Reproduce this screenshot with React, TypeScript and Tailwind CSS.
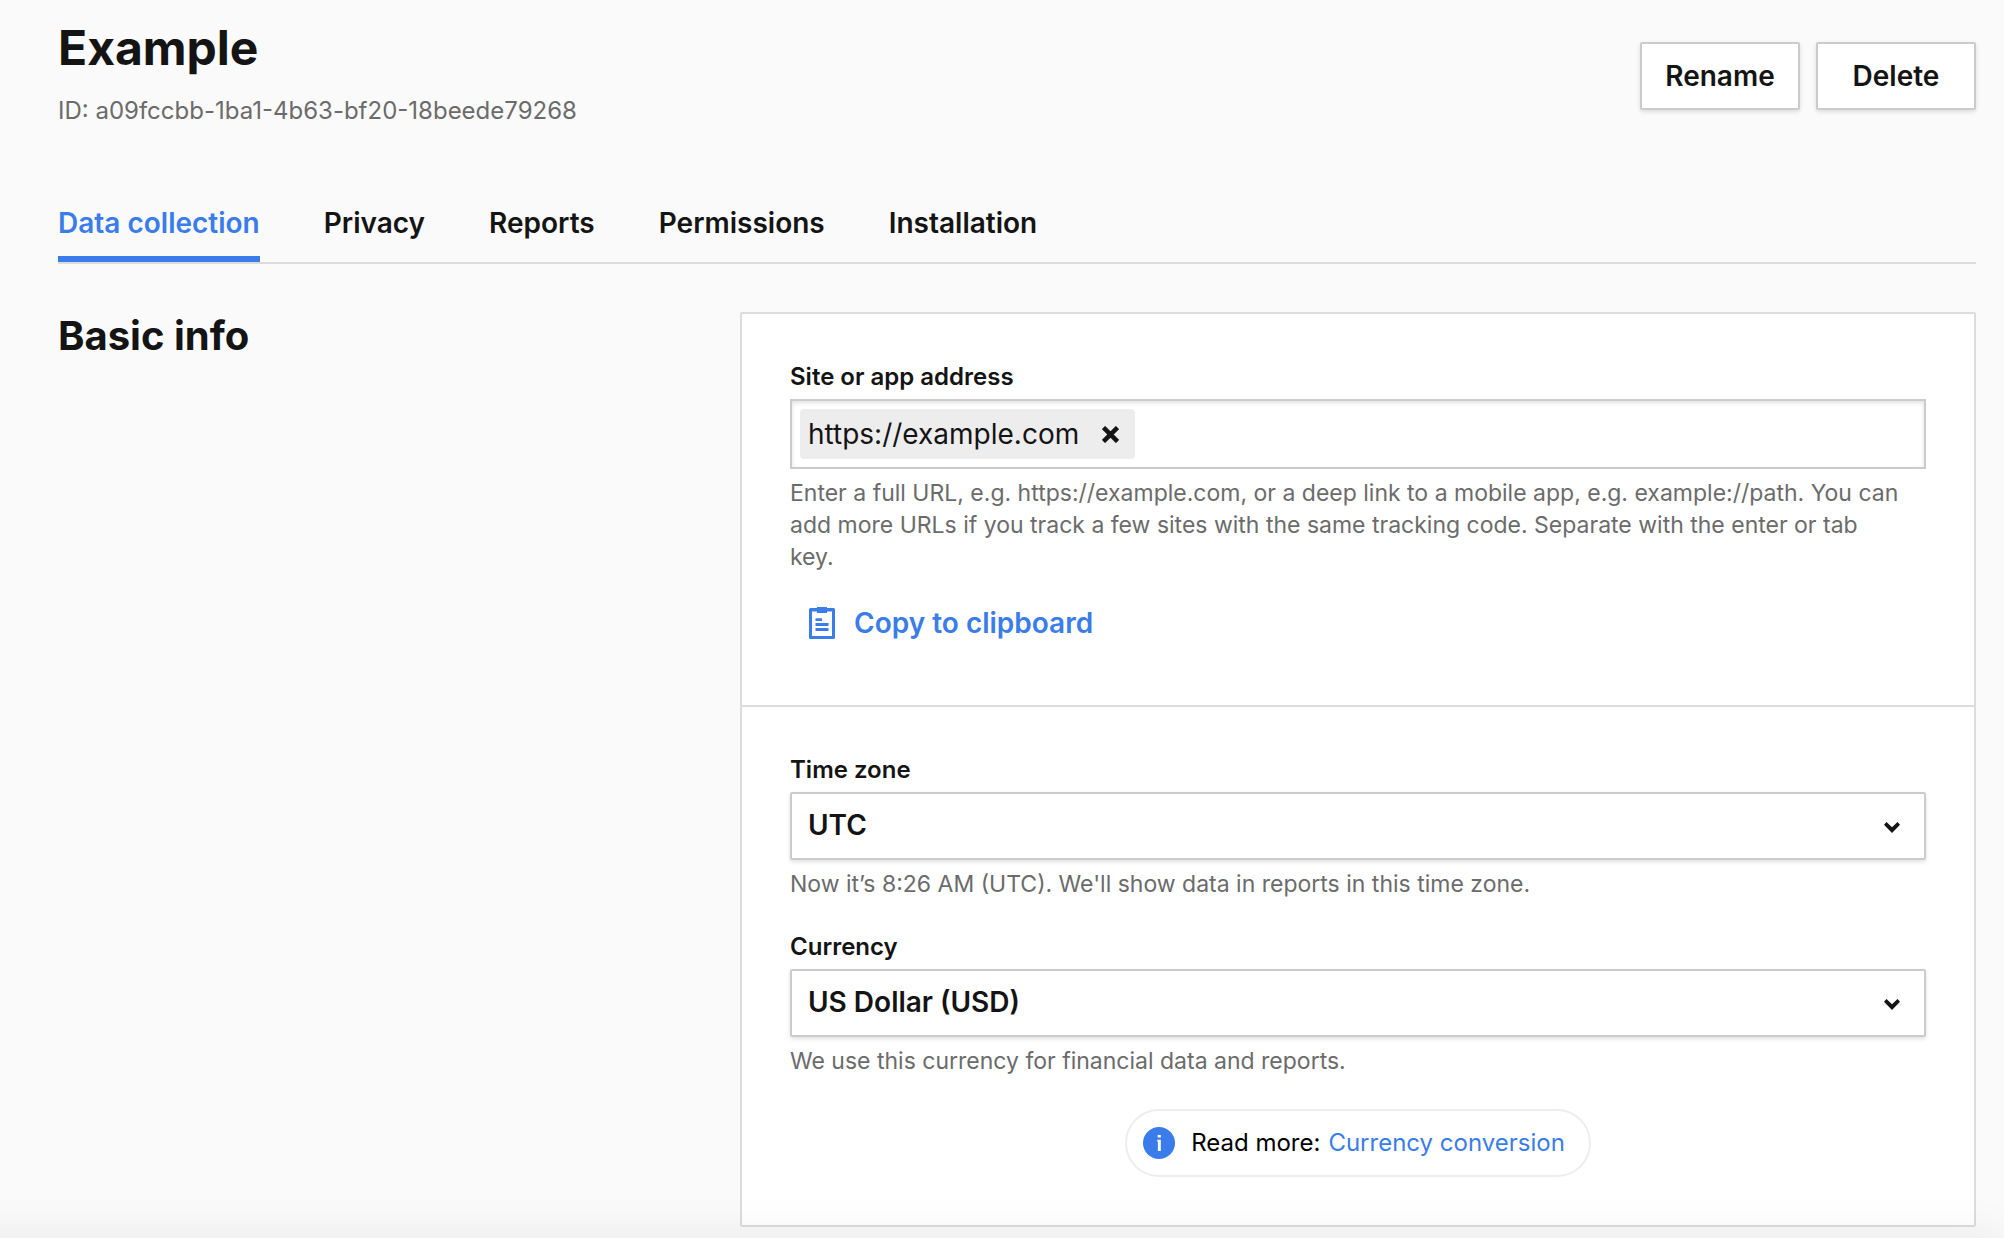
import { useState } from "react";
import type { ReactNode } from "react";

const tabs = ["Data collection", "Privacy", "Reports", "Permissions", "Installation"];

function ActionButton({ children }: { children: ReactNode }) {
  return (
    <button
      type="button"
      className="h-[68px] w-40 rounded-xs border-2 border-[#cbcbcb] bg-white text-[28px] leading-8 font-semibold shadow-[0_2px_4px_rgba(0,0,0,0.12)]"
    >
      {children}
    </button>
  );
}

function Hint({ id, children }: { id: string; children: ReactNode }) {
  return (
    <p id={id} className="mt-2 pr-6 text-[23px] leading-8 text-[#6b6b6b]">
      {children}
    </p>
  );
}

function SelectField({
  id,
  label,
  options,
  hint,
}: {
  id: string;
  label: string;
  options: string[];
  hint: string;
}) {
  return (
    <div>
      <label htmlFor={id} className="mb-[7px] block text-2xl leading-[30px] font-semibold">
        {label}
      </label>
      <div className="relative">
        <select
          id={id}
          aria-describedby={`${id}-hint`}
          className="block h-[68px] w-full appearance-none rounded-xs border-2 border-[#cbcbcb] bg-white pr-16 pb-0.5 pl-4 text-[28px] leading-8 font-semibold shadow-[0_2px_4px_rgba(0,0,0,0.12)]"
        >
          {options.map((option) => (
            <option key={option}>{option}</option>
          ))}
        </select>
        <svg
          viewBox="0 0 16 11"
          aria-hidden="true"
          className="pointer-events-none absolute top-[30px] right-[26px] h-[11px] w-4"
          fill="#141414"
        >
          <path d="M2.500 0 8 5.300 13.500 0 16 2.700 8 11 0 2.700Z" />
        </svg>
      </div>
      <Hint id={`${id}-hint`}>{hint}</Hint>
    </div>
  );
}

function ClipboardIcon() {
  return (
    <svg viewBox="0 0 26 32" className="h-8 w-[26px]" aria-hidden="true" fill="#3a7ce9">
      <path
        fillRule="evenodd"
        d="M1.500 1H8V0H18V1H24.500Q26 1 26 2.500V30.500Q26 32 24.500 32H1.500Q0 32 0 30.500V2.500Q0 1 1.500 1ZM3 4.500V29H23V4.500H18V6H8V4.500Z"
      />
      <path d="M6.500 11.300H13V14H6.500ZM6.500 16H19.500V19H6.500ZM6.500 21H19.500V24H6.500Z" />
    </svg>
  );
}

function InfoIcon() {
  return (
    <svg viewBox="0 0 32 32" className="size-8" aria-hidden="true">
      <circle cx="16" cy="16" r="16" fill="#3a7ce9" />
      <path fill="#fff" d="M14.700 8H17.800V10.500H14.700ZM14.200 12.800H17.800V24H14.900V14.500H14.200Z" />
    </svg>
  );
}

export default function App() {
  const [active, setActive] = useState(tabs[0]);
  const [sites, setSites] = useState(["https://example.com"]);

  return (
    <div className="min-h-screen overflow-x-hidden bg-[#fafafa] pr-7 pl-[58px] font-['Inter',sans-serif] text-[#141414]">
      <header className="flex items-start justify-between pt-[18px]">
        <div>
          <h1 className="text-5xl leading-[60px] font-bold">Example</h1>
          <p className="mt-[17px] text-2xl leading-8 text-[#6b6b6b]">
            ID: a09fccbb-1ba1-4b63-bf20-18beede79268
          </p>
        </div>
        <div className="flex gap-4 pt-6">
          <ActionButton>Rename</ActionButton>
          <ActionButton>Delete</ActionButton>
        </div>
      </header>

      <nav role="tablist" className="mt-[75px] flex gap-16 border-b-2 border-[#dcdcdc]">
        {tabs.map((tab) => (
          <button
            key={tab}
            type="button"
            role="tab"
            aria-selected={tab === active}
            onClick={() => setActive(tab)}
            className={
              tab === active
                ? "h-[60px] border-b-6 border-[#3a7ce9] pb-3 text-[28px] leading-8 font-semibold text-[#3a7ce9]"
                : "h-[60px] border-b-6 border-transparent pb-3 text-[28px] leading-8 font-semibold"
            }
          >
            {tab}
          </button>
        ))}
      </nav>

      <main className="mt-12 grid grid-cols-[682fr_1236fr]">
        <h2 className="text-[40px] leading-12 font-bold">Basic info</h2>

        <div className="rounded-xs border-2 border-[#dcdcdc] bg-white">
          <section className="p-12">
            <label htmlFor="site" className="mb-[7px] block text-2xl leading-[30px] font-semibold">
              Site or app address
            </label>
            <div className="flex h-[70px] items-center gap-2 border-2 border-[#cbcbcb] bg-white px-2 shadow-[inset_0_2px_4px_rgba(0,0,0,0.12)]">
              {sites.map((site) => (
                <span
                  key={site}
                  className="flex h-[50px] items-center gap-[23px] rounded-sm bg-[#ededed] pr-4 pl-2 text-[28px] leading-8"
                >
                  {site}
                  <button
                    type="button"
                    aria-label={`Remove ${site}`}
                    onClick={() => setSites(sites.filter((s) => s !== site))}
                  >
                    <svg
                      viewBox="0 0 17 17"
                      className="size-[17px]"
                      aria-hidden="true"
                      fill="none"
                      stroke="#141414"
                      strokeWidth="4.500"
                    >
                      <path d="M1.500 1.500 15.500 15.500M15.500 1.500 1.500 15.500" />
                    </svg>
                  </button>
                </span>
              ))}
              <input
                id="site"
                type="text"
                aria-describedby="site-hint"
                className="min-w-0 flex-1 bg-transparent text-[28px] leading-8 outline-none"
              />
            </div>
            <Hint id="site-hint">
              Enter a full URL, e.g. https://example.com, or a deep link to a mobile app, e.g.
              example://path. You can add more URLs if you track a few sites with the same tracking
              code. Separate with the enter or tab key.
            </Hint>
            <button
              type="button"
              className="mt-4 flex h-[68px] items-center gap-[19px] px-[19px] text-[28px] leading-8 font-semibold text-[#3a7ce9]"
            >
              <ClipboardIcon />
              Copy to clipboard
            </button>
          </section>

          <section className="flex flex-col gap-8 border-t-2 border-[#dcdcdc] p-12">
            <SelectField
              id="timezone"
              label="Time zone"
              options={["UTC"]}
              hint="Now it’s 8:26 AM (UTC). We'll show data in reports in this time zone."
            />
            <SelectField
              id="currency"
              label="Currency"
              options={["US Dollar (USD)"]}
              hint="We use this currency for financial data and reports."
            />
            <p className="flex h-[68px] items-center gap-2 self-center rounded-full border-2 border-[#ededed] pr-6 pl-4 text-2xl leading-8 text-black">
              <InfoIcon />
              <span className="ml-2">Read more:</span>
              <a href="#currency-conversion" className="text-[#3a7ce9]">
                Currency conversion
              </a>
            </p>
          </section>
        </div>
      </main>

      <div
        aria-hidden="true"
        className="pointer-events-none fixed right-0 -bottom-24 -left-12 h-24 shadow-[0_0_48px_rgba(0,0,0,0.08)]"
      />
    </div>
  );
}
